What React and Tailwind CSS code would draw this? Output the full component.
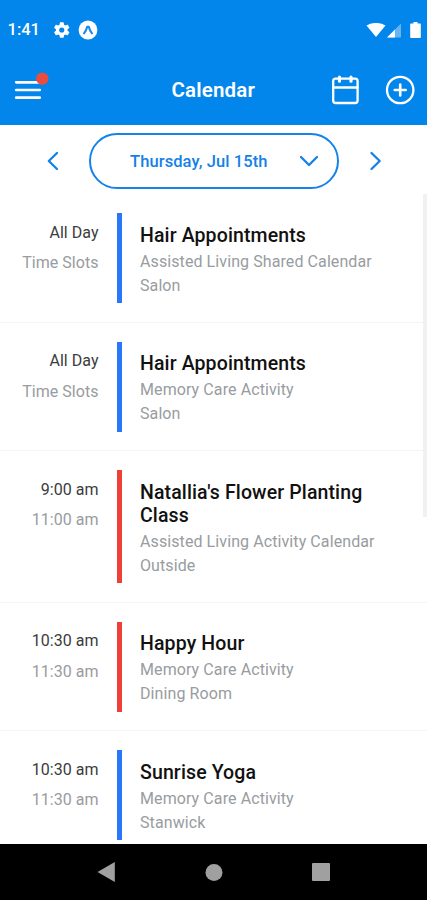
const events = [
  { start: 'All Day', end: 'Time Slots', title: 'Hair Appointments', calendar: 'Assisted Living Shared Calendar', place: 'Salon', bar: 'bg-[#2a76fb]' },
  { start: 'All Day', end: 'Time Slots', title: 'Hair Appointments', calendar: 'Memory Care Activity', place: 'Salon', bar: 'bg-[#2a76fb]' },
  { start: '9:00 am', end: '11:00 am', title: "Natallia's Flower Planting Class", calendar: 'Assisted Living Activity Calendar', place: 'Outside', bar: 'bg-[#ee4037]' },
  { start: '10:30 am', end: '11:30 am', title: 'Happy Hour', calendar: 'Memory Care Activity', place: 'Dining Room', bar: 'bg-[#ee4037]' },
  { start: '10:30 am', end: '11:30 am', title: 'Sunrise Yoga', calendar: 'Memory Care Activity', place: 'Stanwick', bar: 'bg-[#2a76fb]' },
];

function StatusBar() {
  return (
    <div className="flex h-[60px] items-center pl-[7.5px] pr-1.5">
      <span className="w-[46.5px] text-[16.5px] leading-5 font-medium">1:41</span>
      <svg className="h-4 w-[15.5px]" viewBox="2.5 2 19 20" preserveAspectRatio="none" fill="currentColor">
        <path fillRule="evenodd" d="M19.14 12.94a7.1 7.1 0 0 0 0-1.88l2.03-1.58a.5.5 0 0 0 .12-.61l-1.92-3.32a.5.5 0 0 0-.59-.22l-2.39.96a7 7 0 0 0-1.62-.94l-.36-2.54a.5.5 0 0 0-.48-.41h-3.84a.5.5 0 0 0-.47.41l-.36 2.54a7.400 7.400 0 0 0-1.62.94l-2.39-.96a.5.5 0 0 0-.59.22L2.740 8.870a.5.5 0 0 0 .12.61l2.030 1.580a7 7 0 0 0 0 1.880l-2.030 1.580a.5.5 0 0 0-.12.610l1.920 3.320c.12.220.370.290.590.220l2.390-.960c.5.380 1.030.700 1.620.940l.360 2.540c.050.240.240.410.480.410h3.840c.240 0 .440-.170.470-.410l.360-2.540a7.400 7.400 0 0 0 1.620-.940l2.390.960c.220.080.470 0 .590-.220l1.920-3.320a.5.5 0 0 0-.120-.610zM12 15.200a3.200 3.200 0 1 1 0-6.400 3.200 3.200 0 0 1 0 6.400z" />
      </svg>
      <svg className="ml-[8.5px] size-5" viewBox="0 0 20 20">
        <circle cx="10" cy="10" r="9.400" fill="#fff" />
        <path d="M6 13.300 Q8.300 10.500 9.200 6.700 H10.800 Q11.700 10.500 14 13.300" fill="none" stroke="#168af0" strokeWidth="2.100" strokeLinecap="round" strokeLinejoin="round" />
      </svg>
      <svg className="ml-auto h-[15px] w-5" viewBox="0 0 20 15" fill="#fff">
        <path d="M.5 2.500 Q10 -2.700 19.500 2.500 L10 14Z" />
      </svg>
      <svg className="h-[15px] w-4" viewBox="0 0 16 15">
        <path d="M1 14.500 15 .5V14.500Z" fill="#fff" opacity=".4" />
        <path d="M1 14.500 9 6.500V14.500Z" fill="#fff" />
      </svg>
      <svg className="ml-[8px] h-4 w-[11px]" viewBox="0 0 11 16" fill="#fff">
        <path d="M3.500 0h4v1.500H10a.8.8 0 0 1 .8.8v12.900a.8.8 0 0 1-.8.8H1a.8.8 0 0 1-.8-.8V2.300A.8.8 0 0 1 1 1.500h2.500Z" />
      </svg>
    </div>
  );
}

function Header() {
  return (
    <header className="grid h-[65px] grid-cols-[1fr_auto_1fr] items-center pr-[12px] pb-[6px] pl-[13px]">
      <svg className="-mt-[5px] h-8 w-9" viewBox="0 0 36 32">
        <path d="M3.200 11.300H26.700M3.200 19H26.700M3.200 26.700H26.700" stroke="#fff" strokeWidth="2.700" strokeLinecap="round" />
        <circle cx="29.300" cy="7.700" r="6.200" fill="#ea4d3d" />
      </svg>
      <h1 className="w-[85px] text-[20.500px] leading-6 font-semibold tracking-[0.17px]">Calendar</h1>
      <div className="flex items-center justify-end gap-[25px] pt-px">
        <svg className="h-[30px] w-[30px]" viewBox="0 0 30 30" fill="none" stroke="#fff" strokeWidth="2.300" strokeLinecap="round">
          <rect x="3.200" y="3.600" width="24.400" height="24.400" rx="2.500" />
          <path d="M3.200 12.500H27.600" />
          <path d="M9.500 2.200v4M21 2.200v4" strokeWidth="3.200" />
        </svg>
        <svg className="size-[30px]" viewBox="0 0 30 30" fill="none" stroke="#fff" strokeWidth="2.300" strokeLinecap="round">
          <circle cx="15.200" cy="15" r="13.200" />
          <path d="M15.200 9.500v11M9.700 15h11" strokeWidth="2.600" />
        </svg>
      </div>
    </header>
  );
}

function Chevron({ d, className }) {
  return (
    <svg className={className} viewBox="0 0 20 20" fill="none" stroke="#1481e8" strokeWidth="2.300" strokeLinecap="round" strokeLinejoin="round">
      <path d={d} />
    </svg>
  );
}

function DatePicker() {
  return (
    <div className="flex h-[69px] items-start pt-2">
      <Chevron className="mt-[17.500px] ml-[43px] size-5" d="M14 2 5.800 10 14 18" />
      <button className="ml-[26px] flex h-[56px] w-[250px] items-center rounded-full border-2 border-[#1683ea] pl-[39px] text-[#1481e8]">
        <span className="w-[140px] pt-[2px] text-left text-[16.5px] leading-5 font-medium tracking-[0.1px] whitespace-nowrap">Thursday, Jul 15th</span>
        <Chevron className="ml-[29px] size-5" d="M2 6 10 14 18 6" />
      </button>
      <Chevron className="mt-[17.500px] ml-[26px] size-5" d="M6.500 2 14.700 10 6.500 18" />
    </div>
  );
}

function EventRow({ event }) {
  return (
    <li className="flex shrink-0 border-b border-[#f3f4f4] pt-[19px] pb-[18.5px]">
      <div className="w-[98.5px] pt-[4.5px] text-right text-[16px] tracking-[0.03px]">
        <div className="h-[30.5px] leading-[30.5px] text-[#3a3c3e]">{event.start}</div>
        <div className="h-[30.5px] leading-[30.5px] text-[#989ca0]">{event.end}</div>
      </div>
      <div className={`ml-[18px] w-[5px] ${event.bar}`} />
      <div className="ml-[18.5px] w-[245px] pt-[10.5px] pb-[5px]">
        <h2 className="text-[19.5px] leading-[23px] font-medium tracking-[0.12px] text-[#111]">{event.title}</h2>
        <div className="pt-[3px] text-[16px] leading-[24.25px] tracking-[0.09px] text-[#989ca0]">
          <p className="whitespace-nowrap">{event.calendar}</p>
          <p>{event.place}</p>
        </div>
      </div>
    </li>
  );
}

function NavBar() {
  return (
    <nav className="flex h-14 items-center justify-between bg-black px-[97px]">
      <svg className="size-5" viewBox="0 0 20 20" fill="#a0a0a0"><path d="M.5 10 17.800 0V20Z" /></svg>
      <div className="size-[17px] -translate-x-[0.5px] rounded-full bg-[#a0a0a0]" />
      <div className="size-[18.5px] rounded-[1px] bg-[#a0a0a0]" />
    </nav>
  );
}

export default function App() {
  return (
    <div className="flex h-[900px] w-[427px] flex-col overflow-hidden bg-white font-['Roboto',sans-serif]">
      <div className="h-[125px] shrink-0 bg-[#0386ec] text-white">
        <StatusBar />
        <Header />
      </div>
      <DatePicker />
      <main className="relative h-[650px] shrink-0 overflow-hidden">
        <ul className="flex flex-col">
          {events.map((event, i) => <EventRow key={i} event={event} />)}
        </ul>
        <div className="absolute top-0 right-0 h-[323px] w-[4px] bg-[#f1f1f1]" />
      </main>
      <NavBar />
    </div>
  );
}
